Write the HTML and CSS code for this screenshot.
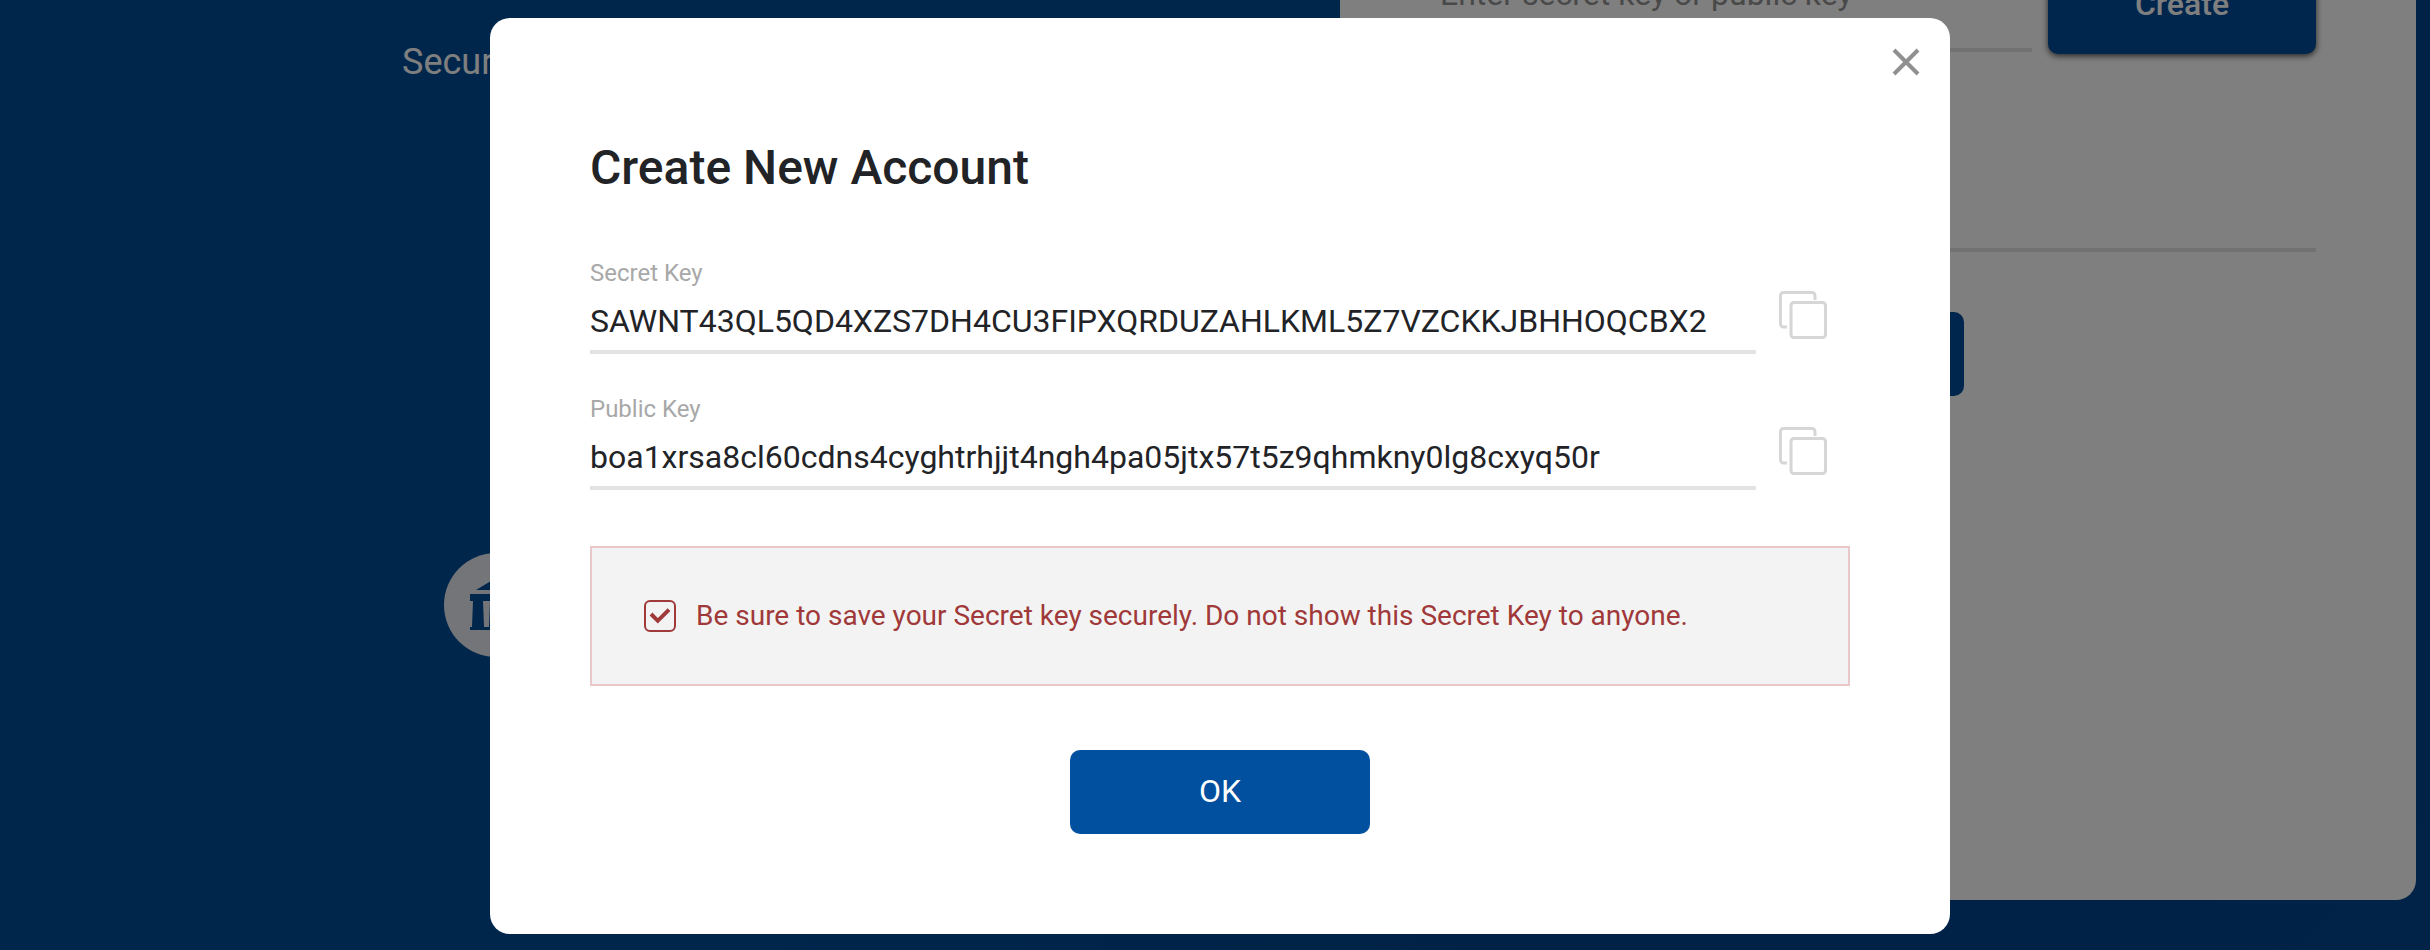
FILE: index.html
```html
<!DOCTYPE html>
<html lang="en">
<head>
<meta charset="utf-8">
<title>Create New Account</title>
<link rel="stylesheet" href="styles.css">
</head>
<body>
<main class="page">
  <section class="intro">
    <p class="intro-text">Secure</p>
    <div class="intro-badge">
      <svg viewBox="0 0 104 104" aria-hidden="true">
        <path d="M32 37 52 25 72 37zM26 41h52v7h-3l1 26h2v3H26v-3h2l1-26h-3zM39 48l1 26h5l1-26zM58 48l1 26h5l1-26z" fill="currentColor" fill-rule="evenodd"/>
      </svg>
    </div>
  </section>
  <section class="card">
    <div class="card-row">
      <input class="card-input" type="text" placeholder="Enter secret key or public key" aria-label="Secret key or public key">
      <button class="card-create" type="button">Create</button>
    </div>
    <input class="card-input card-input-second" type="text" aria-label="Account">
    <button class="card-submit" type="button" aria-label="Submit"></button>
  </section>
</main>
<div class="overlay">
  <div class="modal" role="dialog" aria-modal="true" aria-labelledby="modal-title">
    <button class="modal-close" type="button" aria-label="Close">
      <svg viewBox="0 0 28 28" aria-hidden="true"><path d="M2 2 26 26M26 2 2 26" fill="none" stroke="currentColor" stroke-width="4"/></svg>
    </button>
    <h1 class="modal-title" id="modal-title">Create New Account</h1>
    <div class="fields">
      <div class="field">
        <div class="field-main">
          <label class="field-label" for="secret">Secret Key</label>
          <input class="field-input" id="secret" type="text" readonly value="SAWNT43QL5QD4XZS7DH4CU3FIPXQRDUZAHLKML5Z7VZCKKJBHHOQCBX2">
        </div>
        <button class="copy" type="button" aria-label="Copy secret key">
          <svg viewBox="0 0 48 48" aria-hidden="true"><g fill="none" stroke="currentColor" stroke-width="3"><path d="M36 9V4.500a3 3 0 0 0-3-3H4.500a3 3 0 0 0-3 3V33a3 3 0 0 0 3 3H8"/><rect x="12" y="11.500" width="34.500" height="35" rx="3"/></g></svg>
        </button>
      </div>
      <div class="field">
        <div class="field-main">
          <label class="field-label" for="public">Public Key</label>
          <input class="field-input" id="public" type="text" readonly value="boa1xrsa8cl60cdns4cyghtrhjjt4ngh4pa05jtx57t5z9qhmkny0lg8cxyq50r">
        </div>
        <button class="copy" type="button" aria-label="Copy public key">
          <svg viewBox="0 0 48 48" aria-hidden="true"><g fill="none" stroke="currentColor" stroke-width="3"><path d="M36 9V4.500a3 3 0 0 0-3-3H4.500a3 3 0 0 0-3 3V33a3 3 0 0 0 3 3H8"/><rect x="12" y="11.500" width="34.500" height="35" rx="3"/></g></svg>
        </button>
      </div>
    </div>
    <label class="notice">
      <span class="check">
        <input class="check-box" type="checkbox" checked>
        <svg class="check-mark" viewBox="0 0 32 32" aria-hidden="true"><path d="M7 14 13.800 20.800 25 9.700" fill="none" stroke="currentColor" stroke-width="4"/></svg>
      </span>
      <span class="notice-text">Be sure to save your Secret key securely. Do not show this Secret Key to anyone.</span>
    </label>
    <button class="ok" type="button">OK</button>
  </div>
</div>
</body>
</html>
```

FILE: styles.css
```css
* {
  box-sizing: border-box;
}

body {
  margin: 0;
  overflow: hidden;
  font-family: Roboto, "Liberation Sans", sans-serif;
  color: #222327;
}

button,
input {
  margin: 0;
  padding: 0;
  border: 0;
  border-radius: 0;
  background: none;
  font-family: inherit;
  color: inherit;
  outline: none;
}

svg {
  display: block;
  width: 100%;
  height: 100%;
}

.page {
  display: grid;
  grid-template-rows: 100%;
  grid-template-columns: 1340fr 1090fr;
  height: 100vh;
  overflow: hidden;
  background: linear-gradient(135deg, #004c99 0%, #004c99 50%, #00448c 75%, #00468e 100%);
}

.intro {
  display: flex;
  flex-direction: column;
  align-items: flex-start;
  gap: 467px;
  padding: 38px 0 0 402px;
}

.intro-text {
  margin: 0;
  font-size: 36px;
  line-height: 48px;
  color: #fff;
}

.intro-badge {
  width: 104px;
  height: 104px;
  margin-left: 42px;
  border-radius: 50%;
  background: #e9eaf2;
  color: #004c99;
}

.card {
  display: flex;
  flex-direction: column;
  align-self: end;
  margin: 0 14px 50px 0;
  padding: 100px 100px 504px;
  border-radius: 20px;
  background: #fff;
}

.card-row {
  display: flex;
  align-items: flex-end;
  gap: 16px;
  margin-bottom: 114px;
}

.card-input {
  flex: 1;
  min-width: 0;
  height: 84px;
  margin-bottom: 2px;
  padding-bottom: 28px;
  border-bottom: 4px solid #e3e3e3;
  font-size: 32px;
}

.card-input::placeholder {
  color: #929292;
}

.card-input-second {
  flex: none;
  margin-bottom: 60px;
}

.card-create {
  width: 268px;
  height: 84px;
  padding-bottom: 16px;
  border-radius: 10px;
  background: #004c9b;
  box-shadow: 0 2px 6px rgba(0, 0, 0, 0.7);
  font-size: 32px;
  font-weight: 500;
  color: #fff;
}

.card-submit {
  align-self: center;
  width: 172px;
  height: 84px;
  border-radius: 10px;
  background: #004c9b;
}

.overlay {
  position: fixed;
  inset: 0;
  display: flex;
  align-items: center;
  justify-content: center;
  padding: 2px 0 0 10px;
  background: rgba(0, 0, 0, 0.5);
}

.modal {
  position: relative;
  display: flex;
  flex-direction: column;
  width: 100%;
  max-width: 1460px;
  padding: 122px 100px 100px;
  border-radius: 20px;
  background: #fff;
}

.modal-close {
  position: absolute;
  top: 30px;
  right: 30px;
  width: 28px;
  height: 28px;
  color: #909090;
}

.modal-title {
  margin: 0 0 63px;
  font-size: 48px;
  font-weight: 500;
  line-height: 56px;
}

.fields {
  display: grid;
  gap: 41px;
  margin-bottom: 56px;
}

.field {
  display: flex;
  align-items: flex-end;
  gap: 23px;
  padding-right: 23px;
}

.field-main {
  display: flex;
  flex: 1;
  flex-direction: column;
  min-width: 0;
}

.field-label {
  font-size: 24px;
  line-height: 28px;
  color: #a8a8a8;
}

.field-input {
  height: 67px;
  padding: 14px 0 9px;
  border-bottom: 4px solid #e3e3e3;
  font-size: 32px;
  line-height: 40px;
}

.copy {
  width: 48px;
  height: 48px;
  margin-bottom: 15px;
  color: #d6d6d6;
}

.notice {
  display: flex;
  align-items: center;
  gap: 20px;
  min-height: 140px;
  margin-bottom: 64px;
  padding: 0 52px;
  border: 2px solid #e8c8c9;
  background: #f3f3f3;
  color: #a03939;
}

.check {
  display: grid;
  width: 32px;
  height: 32px;
}

.check-box,
.check-mark {
  grid-area: 1 / 1;
}

.check-box {
  appearance: none;
  border: 2px solid #a03939;
  border-radius: 6px;
}

.check-mark {
  pointer-events: none;
}

.notice-text {
  font-size: 28px;
  line-height: 36px;
}

.ok {
  align-self: center;
  width: 300px;
  height: 84px;
  padding-bottom: 2px;
  border-radius: 10px;
  background: #00509f;
  font-size: 32px;
  color: #fff;
}
```
